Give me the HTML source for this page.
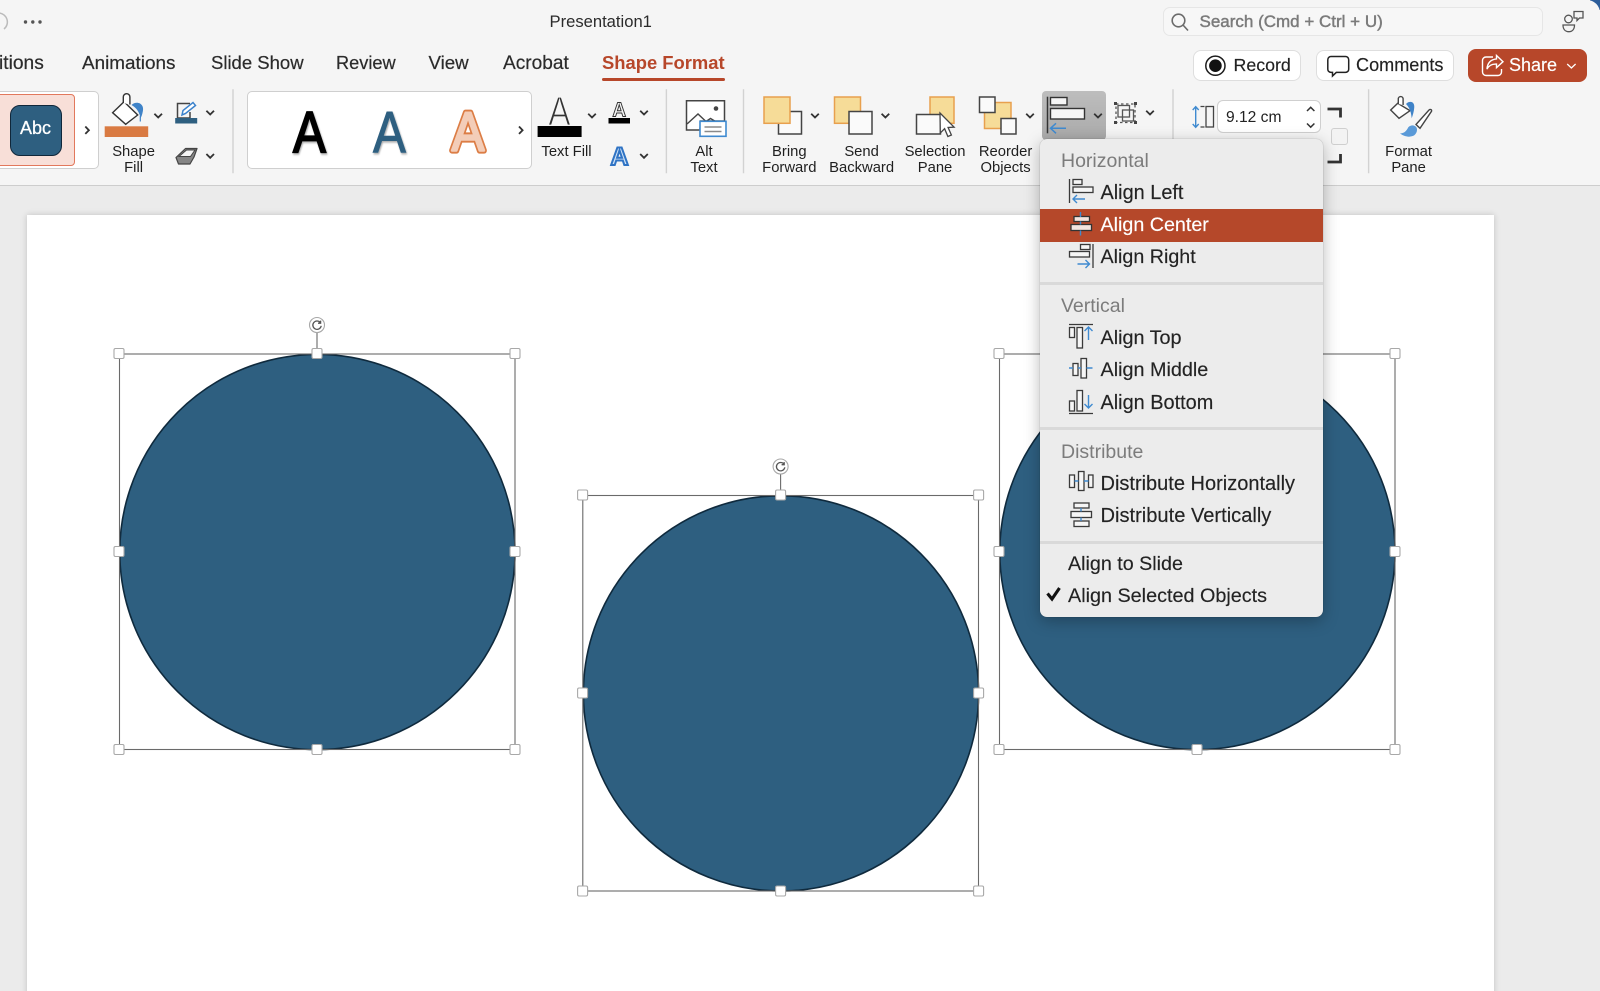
<!DOCTYPE html>
<html><head><meta charset="utf-8"><title>Presentation1</title>
<style>
html,body{margin:0;padding:0;width:1600px;height:991px;overflow:hidden;background:#ebebeb}
body{position:relative;font-family:"Liberation Sans",sans-serif;color:#222}
svg{position:absolute;left:0;top:0;width:1600px;height:991px;display:block}
svg text{font-family:"Liberation Sans",sans-serif}
.a{position:absolute;box-sizing:border-box}
.t{position:absolute;white-space:nowrap}
.tab{top:52px;font-size:18.7px;line-height:22px;color:#2b2b2b;-webkit-text-stroke:.2px #2b2b2b}
.lab{position:absolute;top:145px;width:100px;text-align:center;font-size:14.8px;line-height:15.7px;color:#1f1f1f}
.btn{position:absolute;box-sizing:border-box;background:#fff;border:1.5px solid #dedede;border-radius:8px;height:31px;top:49.5px}
.mi{position:absolute;white-space:nowrap;left:1100.5px;font-size:19.7px;line-height:24px;color:#232323;-webkit-text-stroke:.15px #232323}
.mh{position:absolute;white-space:nowrap;left:1061px;font-size:19.5px;line-height:24px;color:#7c7c7c}
.sep{position:absolute;left:1040px;width:283px;height:2.5px;background:#d9d9d9}
</style></head><body>

<!-- slide -->
<div class="a" style="left:27px;top:215px;width:1467px;height:800px;background:#fff;box-shadow:0 0 6px rgba(0,0,0,.18)"></div>
<svg viewBox="0 0 1600 991">
  <g fill="#2e5f80" stroke="#0f2a3d" stroke-width="1.6">
    <circle cx="317.4" cy="552" r="197.6"/>
    <circle cx="781" cy="693.4" r="197.6"/>
    <circle cx="1197.4" cy="552" r="197.6"/>
  </g>
  <g fill="none" stroke="#6a6a6a" stroke-width="1.1">
    <rect x="119.5" y="354" width="395.5" height="395.5"/>
    <rect x="582.8" y="495.5" width="395.7" height="395.5"/>
    <rect x="999.5" y="354" width="395.5" height="395.5"/>
    <path d="M317 333v20M780.6 474.5v20"/>
  </g>
  <g fill="#fff" stroke="#a8a8a8" stroke-width="1.1">
    <rect x="114" y="348.5" width="10" height="10" rx="1.5"/><rect x="312" y="348.5" width="10" height="10" rx="1.5"/><rect x="510" y="348.5" width="10" height="10" rx="1.5"/>
    <rect x="114" y="546.5" width="10" height="10" rx="1.5"/><rect x="510" y="546.5" width="10" height="10" rx="1.5"/>
    <rect x="114" y="744.5" width="10" height="10" rx="1.5"/><rect x="312" y="744.5" width="10" height="10" rx="1.5"/><rect x="510" y="744.5" width="10" height="10" rx="1.5"/>
    <rect x="577.6" y="490" width="10" height="10" rx="1.5"/><rect x="775.6" y="490" width="10" height="10" rx="1.5"/><rect x="973.6" y="490" width="10" height="10" rx="1.5"/>
    <rect x="577.6" y="688" width="10" height="10" rx="1.5"/><rect x="973.6" y="688" width="10" height="10" rx="1.5"/>
    <rect x="577.6" y="886" width="10" height="10" rx="1.5"/><rect x="775.6" y="886" width="10" height="10" rx="1.5"/><rect x="973.6" y="886" width="10" height="10" rx="1.5"/>
    <rect x="994" y="348.5" width="10" height="10" rx="1.5"/><rect x="1390" y="348.5" width="10" height="10" rx="1.5"/>
    <rect x="994" y="546.5" width="10" height="10" rx="1.5"/><rect x="1390" y="546.5" width="10" height="10" rx="1.5"/>
    <rect x="994" y="744.5" width="10" height="10" rx="1.5"/><rect x="1192" y="744.5" width="10" height="10" rx="1.5"/><rect x="1390" y="744.5" width="10" height="10" rx="1.5"/>
    <circle cx="317" cy="325" r="7.5"/><circle cx="780.6" cy="466.5" r="7.5"/>
  </g>
  <g fill="none" stroke="#555" stroke-width="1.3">
    <path d="M320.2 322.4a4.2 4.2 0 1 0 1 3.4M320.6 320.6v2.6h-2.6"/>
    <path d="M783.8 463.9a4.2 4.2 0 1 0 1 3.4M784.2 462.1v2.6h-2.6"/>
  </g>
</svg>

<!-- ribbon background -->
<div class="a" style="left:0;top:0;width:1600px;height:186px;background:#f5f5f5;border-bottom:1.5px solid #cdcdcd"></div>
<div class="a" style="left:1590px;top:-10px;width:20px;height:20px;background:#2c5d9a"></div>
<div class="a" style="left:1560px;top:0;width:40px;height:30px;background:#f5f5f5;border-top-right-radius:13px"></div>

<!-- title row -->
<div class="t" style="left:549.5px;top:11px;font-size:16.6px;line-height:21px;color:#2b2b2b">Presentation1</div>
<div class="a" style="left:1163px;top:7px;width:380px;height:29px;background:#f7f7f7;border:1.2px solid #e6e6e6;border-radius:7px"></div>
<div class="t" style="left:1199.5px;top:11px;font-size:17px;line-height:21px;color:#7b7b7b;-webkit-text-stroke:.45px #7b7b7b">Search (Cmd + Ctrl + U)</div>

<!-- tabs -->
<div class="t tab" style="left:-1px;top:53px;font-size:19.2px">itions</div>
<div class="t tab" style="left:82px;top:53px;font-size:18.9px">Animations</div>
<div class="t tab" style="left:211px;font-size:18.5px">Slide Show</div>
<div class="t tab" style="left:336px;font-size:18.2px">Review</div>
<div class="t tab" style="left:428.5px">View</div>
<div class="t tab" style="left:503px;top:53px;font-size:19.1px">Acrobat</div>
<div class="t" style="left:602px;top:52px;line-height:22px;color:#b7472a;font-weight:bold;font-size:18.4px">Shape Format</div>
<div class="a" style="left:602px;top:77.5px;width:123px;height:3.5px;background:#b7472a;border-radius:2px"></div>

<!-- buttons -->
<div class="btn" style="left:1193px;width:107.5px"></div>
<div class="t" style="left:1233.5px;top:54px;font-size:17.8px;line-height:23px;color:#222;-webkit-text-stroke:.15px #222">Record</div>
<div class="btn" style="left:1316px;width:138px"></div>
<div class="t" style="left:1356px;top:54px;font-size:18.1px;line-height:23px;color:#222;-webkit-text-stroke:.15px #222">Comments</div>
<div class="a" style="left:1468px;top:49px;width:118.5px;height:32.5px;background:#b7472a;border-radius:8px"></div>
<div class="t" style="left:1509px;top:54px;font-size:18px;line-height:23px;color:#fff;-webkit-text-stroke:.15px #fff">Share</div>

<!-- gallery -->
<div class="a" style="left:-10px;top:91.3px;width:109px;height:78px;background:#fff;border:1.2px solid #cfcfcf;border-radius:5px"></div>
<div class="a" style="left:-10px;top:94.3px;width:84.5px;height:72px;background:#f8dfd8;border:1.5px solid #e2785c;border-radius:4px"></div>
<div class="a" style="left:9.5px;top:104.7px;width:52px;height:51.5px;background:#2e5f80;border:1.5px solid #10273a;border-radius:10px;color:#fff;font-size:18px;line-height:45px;text-align:center;-webkit-text-stroke:.3px #fff">Abc</div>
<div class="a" style="left:247px;top:91.3px;width:285px;height:78px;background:#fff;border:1.2px solid #cfcfcf;border-radius:5px"></div>
<div class="a" style="left:1041.5px;top:91px;width:64.5px;height:48.5px;background:linear-gradient(#bdbdbd,#aaaaaa);border-radius:4px"></div>

<!-- input -->
<div class="a" style="left:1217px;top:100px;width:104px;height:33px;background:#fff;border:1.2px solid #cfcfcf;border-radius:6px"></div>
<div class="t" style="left:1226px;top:108px;font-size:15.6px;line-height:20px;color:#222">9.12 cm</div>
<div class="a" style="left:1331px;top:127.5px;width:17px;height:17px;background:#f3f3f3;border:1.2px solid #cfcfcf;border-radius:3px"></div>

<!-- ribbon labels -->
<div class="lab" style="left:83.6px">Shape<br>Fill</div>
<div class="lab" style="left:516.5px">Text Fill</div>
<div class="lab" style="left:654px">Alt<br>Text</div>
<div class="lab" style="left:739.3px">Bring<br>Forward</div>
<div class="lab" style="left:811.6px">Send<br>Backward</div>
<div class="lab" style="left:885px">Selection<br>Pane</div>
<div class="lab" style="left:955.6px">Reorder<br>Objects</div>
<div class="lab" style="left:1358.6px">Format<br>Pane</div>

<!-- ribbon icons -->
<svg viewBox="0 0 1600 991">
  <defs><filter id="sh" x="-20%" y="-20%" width="140%" height="140%"><feDropShadow dx="1" dy="1.5" stdDeviation="1" flood-color="#000" flood-opacity=".35"/></filter></defs>
  <!-- separators -->
  <g stroke="#d2d2d2" stroke-width="1.4"><path d="M233 89.3V173.3M666.4 89.3V173.3M743.5 89.3V173.3M1173 89.3V173.3M1368.6 89.3V173.3"/></g>
  <!-- title extras -->
  <path d="M-1 13a9 9 0 0 1 5 16" fill="none" stroke="#bbb" stroke-width="1.5"/>
  <g fill="#555"><circle cx="25.5" cy="22" r="1.7"/><circle cx="32.8" cy="22" r="1.7"/><circle cx="40" cy="22" r="1.7"/></g>
  <g fill="none" stroke="#6b6b6b" stroke-width="1.6"><circle cx="1178.5" cy="20.5" r="6.3"/><path d="M1183 25l5 5.5"/></g>
  <g fill="none" stroke="#555" stroke-width="1.3">
    <circle cx="1568.5" cy="19" r="3.8"/>
    <path d="M1563 25h11.5c0 4-2 6.7-5.700 6.7s-5.800-2.7-5.800-6.7z"/>
    <path d="M1574 11.5h9v6.5h-3.5l-2.5 2.5v-2.5h-3z"/>
  </g>
  <!-- record/comment/share icons -->
  <circle cx="1215.4" cy="65.7" r="9.6" fill="none" stroke="#1c1c1c" stroke-width="1.5"/><circle cx="1215.4" cy="65.7" r="6.3" fill="#111"/>
  <path d="M1331 56.5h14.5a3.2 3.2 0 0 1 3.2 3.2v9.5a3.2 3.2 0 0 1-3.2 3.2h-9.2l-3.8 3.6v-3.6h-1.5a3.2 3.2 0 0 1-3.2-3.2v-9.5a3.2 3.2 0 0 1 3.2-3.2z" fill="none" stroke="#222" stroke-width="1.5"/>
  <g fill="none" stroke="#fff" stroke-width="1.4">
    <path d="M1493 57h-7a3.5 3.5 0 0 0-3.5 3.5v11.5a3.5 3.5 0 0 0 3.5 3.5h12a3.5 3.5 0 0 0 3.5-3.5v-3"/>
    <path d="M1496.5 55.5l6.5 6.2-6.5 6v-3.6c-4.5-.2-7.7 1.3-9.5 5 .3-6 3.8-9.8 9.5-10.2z"/>
    <path d="M1567.2 64l4.2 4 4.2-4" stroke-width="1.3"/>
  </g>
  <!-- chevrons -->
  <g fill="none" stroke="#333" stroke-width="1.8">
    <path d="M85.3 126.5l3.6 3.7-3.6 3.7M519 126.5l3.6 3.7-3.6 3.7"/>
    <path d="M154.4 113.7l3.8 3.8 3.8-3.8M206.4 110.7l3.8 3.8 3.8-3.8M206.4 154l3.8 3.8 3.8-3.8M588.2 113.7l3.8 3.8 3.8-3.8M640.2 110.7l3.8 3.8 3.8-3.8M640.2 154l3.8 3.8 3.8-3.8M811.2 113.7l3.8 3.8 3.8-3.8M881.6 113.7l3.8 3.8 3.8-3.8M1026.2 113.7l3.8 3.8 3.8-3.8M1094.2 113.7l3.8 3.8 3.8-3.8M1146.2 110.7l3.8 3.8 3.8-3.8"/>
  </g>
  <!-- shape fill -->
  <path d="M112.6 112.7l11.4-11 13.7 13.3-12 9.3z" fill="#fff" stroke="#333" stroke-width="1.4"/>
  <path d="M123.3 103v-6a3.3 3.3 0 0 1 6.6 0v7.5" fill="#fff" stroke="#333" stroke-width="1.4"/>
  <path d="M131.5 105c2.5-2.500 6-2.800 8.500-1.500 3 1.800 3.500 5 2.800 8-.4 2.500-1.300 5-2.300 7-.7-5.500-3.500-10.500-9-13.500z" fill="#3f83c8"/>
  <path d="M140.3 116v5.500" stroke="#3f83c8" stroke-width="1.2"/>
  <rect x="104.7" y="126.3" width="43.5" height="10.7" fill="#d97a42"/>
  <!-- outline -->
  <path d="M190 103.5h-12.500v14.500h12.500v-6" fill="none" stroke="#444" stroke-width="1.5"/>
  <path d="M182 115l1-4.500 10-8 2.500 3-10 8z" fill="#fff" stroke="#3b82cc" stroke-width="1.5"/>
  <rect x="175.2" y="118" width="22" height="5.5" fill="#2e5f80"/>
  <!-- effects -->
  <path d="M176 157.5l9.500-9h11.500l-3 8.500-4 7h-11.500z" fill="#858585" stroke="#444" stroke-width="1.2" stroke-linejoin="round"/>
  <path d="M179 156.500l7.500-6.500h8.500l-4.500 6.500z" fill="#f4f4f4" stroke="#444" stroke-width="1"/>
  <!-- wordart A -->
  <g font-size="58" text-anchor="middle">
    <text transform="translate(309.5,152.5) scale(.85,1)" fill="#000" stroke="#000" stroke-width="1.8" filter="url(#sh)">A</text>
    <text transform="translate(389.5,152.5) scale(.85,1)" fill="#2e5f80" stroke="#2e5f80" stroke-width="1" filter="url(#sh)">A</text>
    <text transform="translate(468,150.5) scale(.84,.95)" fill="#dc7d45" stroke="#dc7d45" stroke-width="6.5" stroke-linejoin="round">A</text>
    <text transform="translate(468,150.5) scale(.84,.95)" fill="#f3cdb8" stroke="#f3cdb8" stroke-width="2.5" stroke-linejoin="round">A</text>
  </g>
  <!-- text fill -->
  <text transform="translate(559.5,125) scale(.82,1)" font-size="41" text-anchor="middle" fill="#333" stroke="#f5f5f5" stroke-width="1.3">A</text>
  <rect x="537.6" y="126" width="44" height="11" fill="#000"/>
  <text transform="translate(619.3,116.5) scale(.95,1)" font-size="20" font-weight="bold" text-anchor="middle" fill="#f5f5f5" stroke="#333" stroke-width="1">A</text>
  <rect x="608.5" y="118" width="21.5" height="5.5" fill="#000"/>
  <text transform="translate(619.5,165)" font-size="25" font-weight="bold" text-anchor="middle" fill="#cfe2f6" stroke="#2f73c4" stroke-width="2">A</text>
  <!-- alt text -->
  <path d="M700 130h-13.500V100.700h38V121h-24z" fill="#fff" stroke="#444" stroke-width="1.5"/>
  <path d="M687 124l11-10 8 7.500 4.500-3 5 3" fill="none" stroke="#444" stroke-width="1.4"/>
  <circle cx="716" cy="108.5" r="2.3" fill="#444"/>
  <rect x="700" y="121.3" width="26" height="15" fill="#fff" stroke="#3f8ad0" stroke-width="1.6"/>
  <path d="M704.5 127h17M704.5 131.500h17" stroke="#8a8a8a" stroke-width="1.5"/>
  <!-- bring forward -->
  <rect x="778.5" y="111.5" width="23" height="22.5" fill="#fafafa" stroke="#444" stroke-width="1.5"/>
  <rect x="764" y="97" width="26" height="26.3" fill="#f6dc98" stroke="#e8a04e" stroke-width="1.5"/>
  <!-- send backward -->
  <rect x="834.5" y="97" width="26" height="26.3" fill="#f6dc98" stroke="#e8a04e" stroke-width="1.5"/>
  <rect x="849" y="111.5" width="23" height="22.5" fill="#fafafa" stroke="#444" stroke-width="1.5"/>
  <!-- selection pane -->
  <rect x="930" y="97" width="24" height="26.3" fill="#f6dc98" stroke="#e8a04e" stroke-width="1.5"/>
  <rect x="916.5" y="114.5" width="24" height="19.5" fill="#fafafa" stroke="#444" stroke-width="1.5"/>
  <path d="M940 113l.3 20 4.300-4.300 3.300 7.800 3.500-1.500-3.300-7.500 6-.3z" fill="#fff" stroke="#444" stroke-width="1.3"/>
  <!-- reorder -->
  <rect x="984.5" y="102.5" width="26.5" height="26" fill="#f6dc98" stroke="#e8a04e" stroke-width="1.5"/>
  <rect x="979.5" y="97" width="15.5" height="15.5" fill="#fafafa" stroke="#444" stroke-width="1.5"/>
  <rect x="1001" y="118.5" width="15" height="15.5" fill="#fafafa" stroke="#444" stroke-width="1.5"/>
  <!-- align button icon -->
  <path d="M1047.5 96.700v36.600" stroke="#333" stroke-width="1.5"/>
  <rect x="1050.5" y="97.5" width="16.5" height="7.5" fill="#f5f5f5" stroke="#333" stroke-width="1.4"/>
  <rect x="1050.5" y="108.5" width="34" height="10.5" fill="#f5f5f5" stroke="#333" stroke-width="1.4"/>
  <path d="M1066 128.300h-15.500m5.500-5l-5.500 5 5.500 5" fill="none" stroke="#3f8ad0" stroke-width="1.5"/>
  <!-- group -->
  <g fill="none" stroke="#555" stroke-width="1.3">
    <path d="M1116 104h19v18.500h-19z" stroke-dasharray="2.5 2.5"/>
    <rect x="1118" y="105.5" width="11.5" height="11.5"/><rect x="1122.5" y="110" width="11" height="11"/>
  </g>
  <g fill="#444"><rect x="1114" y="102" width="3" height="3"/><rect x="1134" y="102" width="3" height="3"/><rect x="1114" y="121" width="3" height="3"/><rect x="1134" y="121" width="3" height="3"/></g>
  <!-- height -->
  <path d="M1195.700 107v20m-3-17l3-3.300 3 3.300m-6 14l3 3.300 3-3.300" fill="none" stroke="#3f8ad0" stroke-width="1.4"/>
  <rect x="1206" y="106.5" width="7.5" height="20.5" fill="#f5f5f5" stroke="#444" stroke-width="1.3"/>
  <path d="M1200.500 106.500h4M1200.500 127h4" stroke="#444" stroke-width="1.3"/>
  <path d="M1307 111l3.700-3.700 3.700 3.700M1307 123.500l3.700 3.700 3.700-3.700" fill="none" stroke="#333" stroke-width="1.5"/>
  <!-- lock brackets -->
  <path d="M1327.500 109h13v8.500M1327.500 162h13v-8" fill="none" stroke="#333" stroke-width="2.8"/>
  <!-- format pane -->
  <path d="M1390.700 110l7-6.700 12.300 7.400-11 7.600z" fill="#fff" stroke="#444" stroke-width="1.4"/>
  <path d="M1398.300 104v-5a2.400 2.400 0 0 1 4.800 0v6" fill="#fff" stroke="#444" stroke-width="1.4"/>
  <path d="M1406 104c1.500-1.800 3.500-2.500 5.500-2 2.500.8 3 3.500 2.700 6-.3 3.500-1.300 7-2.500 10.300-.5-5.500-1.800-10.500-5.700-14.300z" fill="#3f83c8"/>
  <path d="M1416 124.500l13-14.500c1.500-1.200 3-.3 2.500 1.300l-11.500 17z" fill="#fff" stroke="#444" stroke-width="1.4"/>
  <path d="M1400 133.300c3.500.3 6-1.500 8.300-6 2.500-2.500 6-2.500 8 0 1.500 2.500 .5 6-2 8-4 2.500-10.500 1.500-14.300-2z" fill="#5a9ad8"/>
</svg>

<!-- menu -->
<div class="a" style="left:1040px;top:139px;width:283px;height:477.5px;background:#ececec;border-radius:7px;box-shadow:0 4px 16px rgba(0,0,0,.28),0 0 1px rgba(0,0,0,.35)"></div>
<div class="a" style="left:1040px;top:209px;width:283px;height:33px;background:#b5482a"></div>
<div class="sep" style="top:282px"></div>
<div class="sep" style="top:427px"></div>
<div class="sep" style="top:541px"></div>

<div class="mh" style="top:149px">Horizontal</div>
<div class="mi" style="top:181px;font-size:19.9px">Align Left</div>
<div class="mi" style="top:213px;color:#fff;-webkit-text-stroke:.15px #fff">Align Center</div>
<div class="mi" style="top:245px">Align Right</div>
<div class="mh" style="top:294px">Vertical</div>
<div class="mi" style="top:326px;font-size:19.8px">Align Top</div>
<div class="mi" style="top:358px;font-size:19.8px">Align Middle</div>
<div class="mi" style="top:391px;font-size:19.9px">Align Bottom</div>
<div class="mh" style="top:440px">Distribute</div>
<div class="mi" style="top:472px;font-size:20px">Distribute Horizontally</div>
<div class="mi" style="top:504px;font-size:20.1px">Distribute Vertically</div>
<div class="mi" style="top:552px;left:1068px">Align to Slide</div>
<div class="mi" style="top:584px;left:1068px;font-size:19.8px">Align Selected Objects</div>

<svg viewBox="0 0 1600 991">
  <g fill="#f6f6f6" stroke="#3a3a3a" stroke-width="1.3">
    <!-- align left -->
    <path d="M1069.5 179v24" fill="none"/>
    <rect x="1073" y="179.5" width="9" height="5"/><rect x="1073" y="187" width="20" height="5.5"/>
    <!-- align center -->
    <rect x="1074" y="216.5" width="15.5" height="5" fill="#f2e4df" stroke="#333"/><rect x="1071" y="224.5" width="20.5" height="6" fill="#f2e4df" stroke="#333"/>
    <!-- align right -->
    <path d="M1093 244v24" fill="none"/>
    <rect x="1080.5" y="244.5" width="9.5" height="5"/><rect x="1069.5" y="251.5" width="20" height="5.5"/>
    <!-- align top -->
    <path d="M1069 324.500h24" fill="none"/>
    <rect x="1069.5" y="327.5" width="5" height="10"/><rect x="1077" y="327.5" width="5.5" height="20.5"/>
    <!-- align middle -->
    <rect x="1073" y="363.5" width="5" height="12"/><rect x="1081" y="358.5" width="5.5" height="19.5"/>
    <!-- align bottom -->
    <path d="M1069 413.500h24" fill="none"/>
    <rect x="1069.5" y="401" width="5" height="10"/><rect x="1077" y="390.5" width="5.5" height="20.5"/>
    <!-- distribute horiz -->
    <rect x="1069.5" y="475" width="5" height="12.5"/><rect x="1078.5" y="471.5" width="5.5" height="19"/><rect x="1088.5" y="475" width="4.5" height="12.5"/>
    <!-- distribute vert -->
    <rect x="1074" y="503" width="15" height="5"/><rect x="1071" y="511.5" width="20.5" height="6"/><rect x="1074" y="521" width="15" height="5.5"/>
  </g>
  <g fill="none" stroke="#3f8ad0" stroke-width="1.4">
    <path d="M1085 199h-12m4-4l-4 4 4 4"/>
    <path d="M1080.5 212v5M1080.5 221.500v3M1080.5 230.500v5"/>
    <path d="M1077.5 264h12m-4-4l4 4-4 4"/>
    <path d="M1088.5 327v13m-4-9l4-4 4 4"/>
    <path d="M1069 368h4M1078 368h3M1086.500 368h6"/>
    <path d="M1088.5 408v-13m-4 9l4 4 4-4"/>
    <path d="M1074.5 481h4M1084 481h4.500"/>
    <path d="M1081 508v3.500M1081 517.500v3.500"/>
  </g>
  <path d="M1047.5 593.500l4.500 5.500 7.500-11" fill="none" stroke="#111" stroke-width="3.1"/>
</svg>
</body></html>
